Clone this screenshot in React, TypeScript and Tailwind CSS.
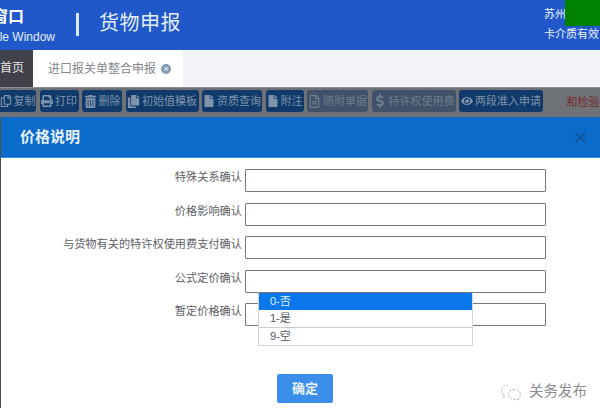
import { FaRegCopy, FaPrint, FaTrashAlt, FaCopy, FaFile, FaRegFileAlt, FaDollarSign, FaEye } from 'react-icons/fa';
import type { ReactNode } from 'react';

const font = "font-['Liberation_Sans','Noto_Sans_CJK_SC',sans-serif]";

const tools: { label: string; icon: ReactNode; w: string; dim?: boolean; ml?: string }[] = [
  { label: '复制', icon: <FaRegCopy className="text-[12px]" />, w: 'w-[37px]', ml: '-ml-[1px]' },
  { label: '打印', icon: <FaPrint className="text-[12px]" />, w: 'w-[39px]' },
  { label: '删除', icon: <FaTrashAlt className="text-[13px]" />, w: 'w-[40px]' },
  { label: '初始值模板', icon: <FaCopy className="text-[13px]" />, w: 'w-[73px]' },
  { label: '资质查询', icon: <FaFile className="text-[12px]" />, w: 'w-[60px]' },
  { label: '附注', icon: <FaFile className="text-[12px]" />, w: 'w-[38px]' },
  { label: '随附单据', icon: <FaRegFileAlt className="text-[13px]" />, w: 'w-[61px]', dim: true },
  { label: '特许权使用费', icon: <FaDollarSign className="text-[14px]" />, w: 'w-[84px]', dim: true },
  { label: '两段准入申请', icon: <FaEye className="text-[12px]" />, w: 'w-[84px]' },
];

const rows = ['特殊关系确认', '价格影响确认', '与货物有关的特许权使用费支付确认', '公式定价确认', '暂定价格确认'];

export default function App() {
  return (
    <div className={`${font} relative w-[600px] h-[408px] overflow-hidden bg-[#4a4d52] flex flex-col`}>
      {/* top bar */}
      <div className="h-[50px] shrink-0 bg-[#2058c9] flex relative text-white">
        <div className="-ml-[26px] w-[81px] pt-[6px] shrink-0">
          <div className="text-[16px] leading-[22px] font-bold pl-[2px] whitespace-nowrap">单窗口</div>
          <div className="text-[12px] leading-[13px] mt-[3px] whitespace-nowrap text-right text-[#e4edfb]">Single Window</div>
        </div>
        <div className="w-[3px] h-[23px] bg-[#dbe6f7] ml-[21px] mt-[13px]" />
        <div className="ml-[20px] mt-[10px] text-[20px] leading-[26px] text-[#e4edfb] tracking-[0.5px]">货物申报</div>
        <div className="ml-auto w-[56px] shrink-0 text-[11px] text-[#eef3fc] whitespace-nowrap">
          <div className="flex h-[26px]">
            <span className="mt-[7px] leading-[14px] w-[21px]">苏州</span>
            <div className="w-[35px] h-[26px] bg-[#008000]" />
          </div>
          <div className="mt-[1px] leading-[14px]">卡介质有效</div>
        </div>
      </div>

      {/* tabs */}
      <div className="h-[38px] shrink-0 bg-[#f1f3f6] flex border-b-[1px] border-[#8b8e92]">
        <div className="w-[33px] bg-[#404149] text-[#e6e6e8] text-[12px] leading-[37px] text-right pr-[11px] whitespace-nowrap overflow-hidden">首页</div>
        <div className="w-[150px] bg-white flex items-center pl-[15px] gap-[5px] text-[12px] text-[#85888c]">
          <span className="whitespace-nowrap">进口报关单整合申报</span>
          <span className="w-[10px] h-[10px] rounded-full bg-[#7f9cb4] text-white text-[9px] leading-[10px] text-center">×</span>
        </div>
      </div>

      {/* toolbar, dimmed by the modal backdrop */}
      <div className="h-[29px] shrink-0 bg-[#6e7175] flex items-start pt-[2px] gap-[3.5px] whitespace-nowrap text-[11px]">
        {tools.map((t) => (
          <div
            key={t.label}
            className={`${t.w} ${t.ml ?? ''} h-[22px] rounded-[3px] flex items-center justify-center gap-[2px] shrink-0 overflow-hidden ${t.dim ? 'bg-[#3f5269] text-[#6e7c8c]' : 'bg-[#0f3a6b] text-[#7f93aa]'}`}
          >
            {t.icon}
            {t.label}
          </div>
        ))}
        <span className="ml-[20px] mt-[4px] text-[#7a2a2c] text-[11px]">和检验</span>
      </div>

      {/* modal */}
      <div className="flex-1 ml-[1px] flex flex-col bg-white relative">
        <div className="h-[41px] bg-[#0b6bcb] border-b-[1px] border-[#3c8fdc] flex items-center justify-between pl-[19px] pr-[13px] shrink-0">
          <span className="text-[15px] font-bold text-[#e6f1fb]">价格说明</span>
          <svg width="13" height="13" viewBox="0 0 13 13" className="text-[#17508f]">
            <path d="M1.5 1.5l10 10M11.5 1.5l-10 10" stroke="currentColor" strokeWidth="1.6" fill="none" />
          </svg>
        </div>

        <div className="pt-[11px] flex flex-col gap-[10.5px]">
          {rows.map((r) => (
            <div key={r} className="flex items-start">
              <div className="w-[241px] pt-[1px] text-right text-[11.2px] leading-[14px] text-[#5e6165] whitespace-nowrap">{r}</div>
              <div className="ml-[3px] w-[301px] h-[23px] bg-white border border-[#75777a] rounded-[1px]" />
            </div>
          ))}
        </div>

        <div className="ml-[276px] mt-[48px] w-[56px] h-[29px] rounded-[2px] bg-[#3a8eea] text-[#e8f2fd] text-[13px] font-bold flex items-center justify-center">
          确定
        </div>

        {/* select options */}
        <div className="absolute left-[257px] top-[176px] w-[215px] bg-white border-x border-b border-[#d4d6d8] text-[11px] leading-[17px] text-[#55585c]">
          <div className="h-[17px] bg-[#0a78ea] text-[#dcecfd] pl-[11px]">0-否</div>
          <div className="h-[18px] border-b border-[#c9cbcd] pl-[11px]">1-是</div>
          <div className="h-[17px] pl-[11px]">9-空</div>
        </div>

        {/* watermark */}
        <div className="absolute left-[499px] top-[264px] flex items-center gap-[7px] text-[#8b8d90] text-[14.5px] whitespace-nowrap">
          <svg width="22" height="18" viewBox="0 0 22 18" fill="none" stroke="#c3c5c7" strokeWidth="1.2">
            <path d="M8 2C4.500 2 1.500 4.500 1.500 7.500c0 1.800 1 3.200 2.500 4.300L3.500 14l2.500-1.300" strokeDasharray="2 1.2" />
            <path d="M14 6.500c3.500 0 6.500 2.400 6.500 5.200 0 1.500-.8 2.700-2 3.700l.4 1.800-2.200-1.100c-3.700 1.200-8.200-.8-8.200-4.400 0-2.800 2.500-5.200 5.500-5.200z" strokeDasharray="2 1.2" />
          </svg>
          关务发布
        </div>
      </div>
    </div>
  );
}
